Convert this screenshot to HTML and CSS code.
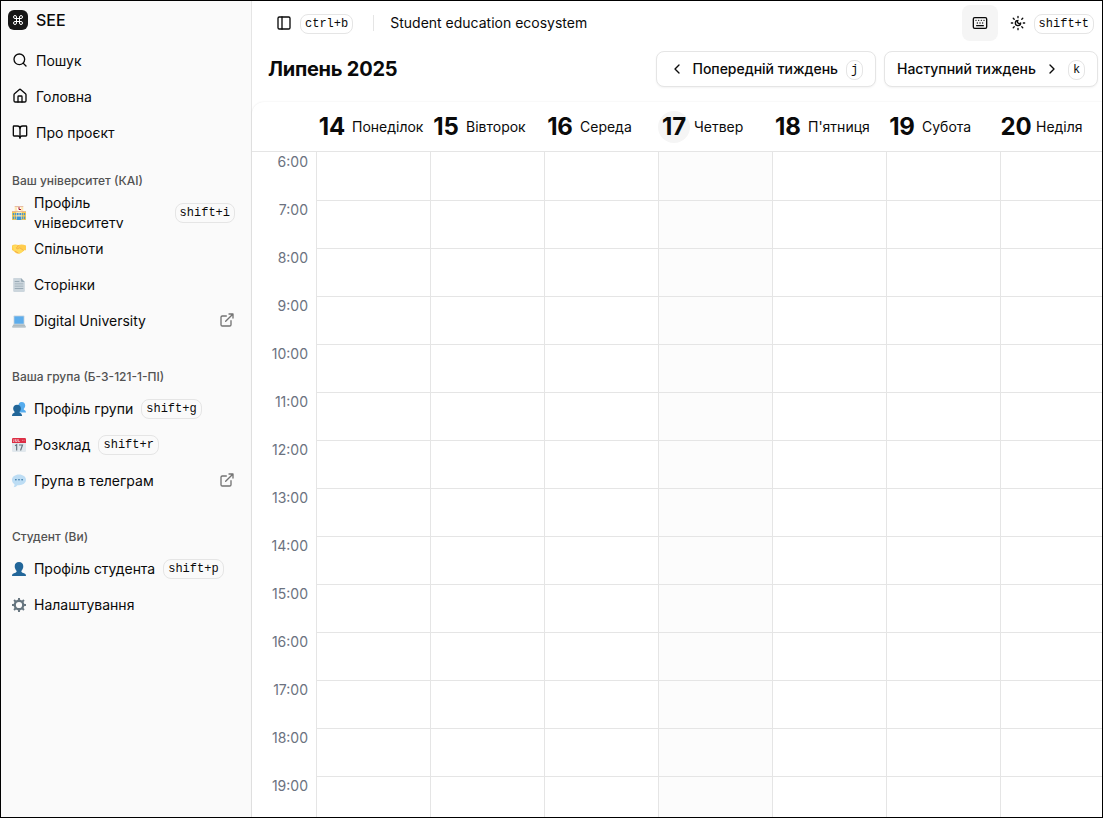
FILE: index.html
```html
<!DOCTYPE html>
<html lang="uk">
<head>
<meta charset="utf-8">
<title>SEE</title>
<link rel="stylesheet" href="styles.css">
</head>
<body>
<div class="app">
  <aside class="sidebar">
    <div class="brand">
      <span class="logo"><svg class="ic" viewBox="0 0 24 24"><path d="M15 6v12a3 3 0 1 0 3-3H6a3 3 0 1 0 3 3V6a3 3 0 1 0-3 3h12a3 3 0 1 0-3-3"/></svg></span>
      <span>SEE</span>
    </div>
    <nav class="menu main-menu">
      <a class="item"><svg class="ic" viewBox="0 0 24 24"><circle cx="11" cy="11" r="8"/><path d="m21 21-4.3-4.3"/></svg><span>Пошук</span></a>
      <a class="item"><svg class="ic" viewBox="0 0 24 24"><path d="M15 21v-8a1 1 0 0 0-1-1h-4a1 1 0 0 0-1 1v8"/><path d="M3 10a2 2 0 0 1 .709-1.528l7-6a2 2 0 0 1 2.582 0l7 6A2 2 0 0 1 21 10v9a2 2 0 0 1-2 2H5a2 2 0 0 1-2-2z"/></svg><span>Головна</span></a>
      <a class="item"><svg class="ic" viewBox="0 0 24 24"><path d="M12 7v14"/><path d="M3 18a1 1 0 0 1-1-1V4a1 1 0 0 1 1-1h5a4 4 0 0 1 4 4 4 4 0 0 1 4-4h5a1 1 0 0 1 1 1v13a1 1 0 0 1-1 1h-6a3 3 0 0 0-3 3 3 3 0 0 0-3-3z"/></svg><span>Про проєкт</span></a>
    </nav>

    <section class="group">
      <h2 class="label">Ваш університет (КАІ)</h2>
      <div class="menu">
        <a class="item"><svg class="emoji" viewBox="0 0 36 36"><path fill="#ffcc4d" d="M0 14h36v22H0z"/><path fill="#ffe8b6" d="M7 1h22v13H7zM11 14h14v20H11z"/><path fill="#e0aa94" d="M0 13h36v2H0zM7 0h22v2H7z"/><path fill="#3b94d9" d="M2 18h3v6H2zm5 0h3v6H7zm19 0h3v6h-3zm5 0h3v6h-3zM2 27h3v7H2zm5 0h3v7H7zm19 0h3v7h-3zm5 0h3v7h-3zM12 18h5v6h-5zm7 0h5v6h-5zm-7 9h12v9H12z"/><circle cx="18" cy="8" r="5.500" fill="#fff"/><path d="M18 3v6h5" fill="none" stroke="#a0041e" stroke-width="2.500"/></svg><span class="text wrapped">Профіль університету</span><kbd>shift+i</kbd></a>
        <a class="item"><svg class="emoji" viewBox="0 0 36 36"><path fill="#ffcc4d" d="M0 9c5-3 10-3 16-1 7-3 13-2 20 1v12h-5c-4 4-9 9-14 9-6 0-10-4-15-9H0z"/><path fill="#ffdc5d" d="M2 10c5-2 9-2 13 0l-4 5c1 3 5 2 9 0l11 7c-4 3-8 7-12 7L5 21z"/><path d="m17 9-6 6c1 4 5 3 9 0l10 7M8 24l8 4" fill="none" stroke="#ef9645" stroke-width="1.500"/></svg><span class="text">Спільноти</span></a>
        <a class="item"><svg class="emoji" viewBox="0 0 36 36"><path fill="#ccd6dd" d="M4 0h19l10 10v23a3 3 0 0 1-3 3H6a3 3 0 0 1-3-3V2z"/><path fill="#99aab5" d="M23 0v8a2 2 0 0 0 2 2h8zM7 8h12v2H7zm0 6h22v2H7zm0 6h22v2H7zm0 6h22v2H7z"/></svg><span class="text">Сторінки</span></a>
        <a class="item"><svg class="emoji" viewBox="0 0 36 36"><path fill="#ccd6dd" d="M6 4h24a2 2 0 0 1 2 2v22H4V6a2 2 0 0 1 2-2z"/><path fill="#5dadec" d="M6 6h24v19H6z"/><path fill="#aebbc1" d="m4 27-4 6h36l-4-6z"/><path fill="#9aaab4" d="M0 33h36a2 2 0 0 1-2 2H2a2 2 0 0 1-2-2z"/></svg><span class="text">Digital University</span><svg class="ic ext" viewBox="0 0 24 24"><path d="M15 3h6v6M10 14 21 3M18 13v6a2 2 0 0 1-2 2H5a2 2 0 0 1-2-2V8a2 2 0 0 1 2-2h6"/></svg></a>
      </div>
    </section>

    <section class="group">
      <h2 class="label">Ваша група (Б-3-121-1-ПІ)</h2>
      <div class="menu">
        <a class="item"><svg class="emoji" viewBox="0 0 36 36"><path fill="#55acee" d="M25 0c6 0 9 4 9 9 0 4-2 7-4 9 0 3 6 2 6 9H16V12c0-7 3-12 9-12z"/><path fill="#226699" d="M13 7c6 0 10 4 10 10 0 4-2 7-4 9 0 3 7 2 7 10H0c0-8 7-7 7-10-2-2-4-5-4-9 0-6 4-10 10-10z"/></svg><span class="text">Профіль групи</span><kbd>shift+g</kbd></a>
        <a class="item"><svg class="emoji" viewBox="0 0 36 36"><path fill="#e1e8ed" d="M0 9h36v24a3 3 0 0 1-3 3H3a3 3 0 0 1-3-3z"/><path fill="#dd2e44" d="M3 0h30a3 3 0 0 1 3 3v10H0V3a3 3 0 0 1 3-3z"/><path d="M5 3v6H3m6-6v6h4V3m3 0v6h4M26 6h2m2 0h2" fill="none" stroke="#f5f8fa" stroke-width="1.6"/><path d="m8 20 4-3v15M18 18h9l-5 14" fill="none" stroke="#66757f" stroke-width="3"/></svg><span class="text">Розклад</span><kbd>shift+r</kbd></a>
        <a class="item"><svg class="emoji" viewBox="0 0 36 36"><path fill="#bdddf4" d="M18 1c10 0 18 6 18 14s-8 14-18 14h-4c-2 3-6 5-10 5 2-2 3-5 2-8-4-3-6-6-6-11C0 7 8 1 18 1z"/><g fill="#226699"><circle cx="10" cy="15" r="2"/><circle cx="18" cy="15" r="2"/><circle cx="26" cy="15" r="2"/></g></svg><span class="text">Група в телеграм</span><svg class="ic ext" viewBox="0 0 24 24"><path d="M15 3h6v6M10 14 21 3M18 13v6a2 2 0 0 1-2 2H5a2 2 0 0 1-2-2V8a2 2 0 0 1 2-2h6"/></svg></a>
      </div>
    </section>

    <section class="group">
      <h2 class="label">Студент (Ви)</h2>
      <div class="menu">
        <a class="item tight"><svg class="emoji" viewBox="0 0 36 36"><path fill="#226699" d="M18 0c7 0 11 5 11 11 0 5-2 9-5 12 0 3 2 4 5 5 5 1 7 3 7 8H0c0-5 2-7 7-8 3-1 5-2 5-5-3-3-5-7-5-12C7 5 11 0 18 0z"/></svg><span class="text">Профіль студента</span><kbd>shift+p</kbd></a>
        <a class="item"><svg class="emoji" viewBox="0 0 36 36"><circle cx="18" cy="18" r="11" fill="none" stroke="#66757f" stroke-width="6"/><path d="M18 0v6M18 30v6M0 18h6M30 18h6M5.3 5.3l4.2 4.2M26.5 26.5l4.2 4.2M30.700 5.300l-4.200 4.200M9.500 26.500l-4.200 4.200" stroke="#66757f" stroke-width="5"/></svg><span class="text">Налаштування</span></a>
      </div>
    </section>
  </aside>

  <main class="content">
    <header class="topbar">
      <svg class="ic" viewBox="0 0 24 24"><rect x="3" y="3" width="18" height="18" rx="2"/><path d="M9 3v18"/></svg>
      <kbd>ctrl+b</kbd>
      <span class="divider"></span>
      <span class="site">Student education ecosystem</span>
      <span class="key-toggle"><svg class="ic" viewBox="0 0 24 24"><path d="M10 8h.01M12 12h.01M14 8h.01M16 12h.01M18 8h.01M6 8h.01M7 16h10M8 12h.01"/><rect x="2" y="4" width="20" height="16" rx="2"/></svg></span>
      <svg class="ic theme" viewBox="0 0 24 24"><path d="M12 8a2.83 2.83 0 0 0 4 4 4 4 0 1 1-4-4M12 2v2M12 20v2M4.900 4.900l1.400 1.400M17.700 17.700l1.400 1.400M2 12h2M20 12h2M6.300 17.700l-1.400 1.400M19.100 4.900l-1.400 1.400"/></svg>
      <kbd>shift+t</kbd>
    </header>

    <div class="toolbar">
      <h1 class="month">Липень 2025</h1>
      <button class="btn prev"><svg class="ic" viewBox="0 0 24 24"><path d="m15 18-6-6 6-6"/></svg><span>Попередній тиждень</span><kbd>j</kbd></button>
      <button class="btn next"><span>Наступний тиждень</span><svg class="ic" viewBox="0 0 24 24"><path d="m9 18 6-6-6-6"/></svg><kbd>k</kbd></button>
    </div>

    <div class="calendar">
      <div class="days">
        <div class="day"><b>14</b><span>Понеділок</span></div>
        <div class="day"><b>15</b><span>Вівторок</span></div>
        <div class="day"><b>16</b><span>Середа</span></div>
        <div class="day today"><b>17</b><span>Четвер</span></div>
        <div class="day"><b>18</b><span>П'ятниця</span></div>
        <div class="day"><b>19</b><span>Субота</span></div>
        <div class="day"><b>20</b><span>Неділя</span></div>
      </div>
      <div class="grid">
        <div class="times">
          <div>6:00</div><div>7:00</div><div>8:00</div><div>9:00</div><div>10:00</div><div>11:00</div><div>12:00</div><div>13:00</div><div>14:00</div><div>15:00</div><div>16:00</div><div>17:00</div><div>18:00</div><div>19:00</div>
        </div>
        <div class="col"></div><div class="col"></div><div class="col"></div><div class="col current"></div><div class="col"></div><div class="col"></div><div class="col"></div>
      </div>
    </div>
  </main>
</div>
</body>
</html>
```
FILE: styles.css
```css
* { box-sizing: border-box; }
body { margin: 0; font: 14px/20px Inter, "Noto Sans", sans-serif; color: #0a0a0a; background: #fff; }
h1, h2 { margin: 0; }
.app { display: flex; width: 1103px; height: 818px; border: 1px solid #000; overflow: hidden; }
.ic { width: 16px; height: 16px; flex: none; fill: none; stroke: currentColor; stroke-width: 2; stroke-linecap: round; stroke-linejoin: round; }
.emoji { width: 14px; height: 14px; flex: none; }
kbd { flex: none; height: 20px; padding: 1px 4px 0; border: 1px solid #e5e5e5; border-radius: 8px; font: 12px/17px "Liberation Mono", monospace; color: #0a0a0a; }

.sidebar { width: 251px; flex: none; background: #fafafa; border-right: 1px solid #e5e5e5; }
.brand { display: flex; align-items: center; gap: 8px; height: 20px; margin: 9px 0 0 7px; font-size: 16px; font-weight: 500; }
.logo { display: flex; align-items: center; justify-content: center; width: 20px; height: 20px; border-radius: 6px; background: #171717; color: #fff; }
.logo .ic { width: 12px; height: 12px; }
.menu { display: flex; flex-direction: column; gap: 4px; padding: 0 16px 0 11px; }
.main-menu { margin: 15px 0 16px; }
.item { display: flex; align-items: center; gap: 8px; height: 32px; overflow: hidden; }
.item .ic { margin-bottom: 2px; }
.tight .text { letter-spacing: -0.04px; }
.wrapped { clip-path: inset(0 0 5px); }
.group { margin-bottom: 24px; }
.label { height: 32px; padding-left: 11px; font-size: 12px; font-weight: 500; line-height: 32px; color: #525252; }
.item .ext { margin-left: auto; color: #737373; }

.content { flex: 1; min-width: 0; display: flex; flex-direction: column; }
.topbar { display: flex; align-items: center; height: 44px; margin-bottom: 1px; padding: 0 8px 0 24px; }
.topbar kbd { margin: 2px 0 0 8px; }
.divider { width: 1px; height: 16px; margin: 0 16px 0 20px; background: #e5e5e5; }
.key-toggle { display: flex; align-items: center; justify-content: center; width: 36px; height: 36px; margin-left: auto; border-radius: 8px; background: #f5f5f5; }
.theme { margin-left: 12px; }
.toolbar { display: flex; align-items: center; gap: 8px; height: 46px; padding: 0 4px 0 16px; }
.month { margin-right: auto; font-size: 20px; line-height: 28px; font-weight: 700; letter-spacing: -0.25px; }
.btn { display: flex; align-items: center; gap: 8px; height: 36px; padding: 0 12px; border: 1px solid #e5e5e5; border-radius: 8px; background: #fff; color: #0a0a0a; font: 500 14px/20px Inter, sans-serif; letter-spacing: -0.02px; white-space: nowrap; box-shadow: 0 1px 2px rgba(0,0,0,.05); }
.btn kbd { width: 17px; margin-top: 2px; }
.prev { width: 220px; }
.prev .ic { margin-right: -0.5px; }
.next { width: 214px; }

.calendar { flex: 1; min-height: 0; margin-top: 10px; border-radius: 12px 0 0 0; box-shadow: 0 0 2px rgba(0,0,0,.1); overflow: hidden; }
.days { display: flex; height: 50px; padding-left: 64px; border-bottom: 1px solid #e5e5e5; }
.day { display: flex; flex: none; align-items: center; width: 114px; gap: 4px; }
.day b { display: flex; align-items: center; justify-content: center; width: 32px; height: 32px; border-radius: 50%; font-size: 24px; font-weight: 700; letter-spacing: -0.1px; }
.today b { background: #f5f5f5; }
.grid { display: flex; height: 666px; }
.times { width: 64px; flex: none; padding-right: 8px; text-align: right; color: #6b7280; }
.times div { height: 48px; }
.col { flex: none; width: 114px; border-left: 1px solid #e5e5e5; background: repeating-linear-gradient(transparent 0 47px, #e5e5e5 47px 48px) 0 1px; }
.current { background-color: #fcfcfc; }
```
